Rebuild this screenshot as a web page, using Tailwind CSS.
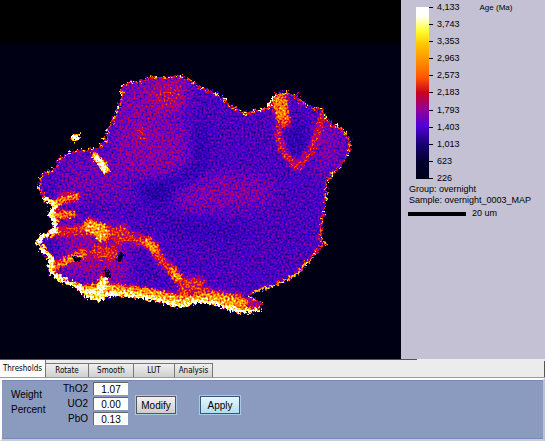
<!DOCTYPE html>
<html lang="en">
<head>
    <meta charset="utf-8">
    <meta name="viewport" content="width=device-width, initial-scale=1">
    <title>Age map</title>
    <script src="https://cdn.jsdelivr.net/npm/@tailwindcss/browser@4"></script>
</head>
<body class="flex min-h-screen flex-col bg-[#ececec] font-['Liberation_Sans',Arial,sans-serif] text-black">

<main class="flex bg-[#c5c1d5]">
    <!-- Age map: grey levels are drawn first, the filter adds grain and maps them to the colour scale -->
    <div class="min-w-0 flex-1 bg-[#000014]">
        <svg xmlns="http://www.w3.org/2000/svg" viewBox="0 0 401 359" class="block h-auto w-full" role="img" aria-label="Age map of the sample">
            <defs>
                <path id="grain" d="M121 92L122 86L130 82L142 80L150 77L165 77L180 76L190 79L200 87L215 93L224 98L228 104L240 110L247 113L258 110L268 107L272 101L277 93L288 92L295 95L304 103L314 107L323 109L326 118L332 124L342 129L349 138L351 147L348 156L341 166L333 174L327 183L326 200L323 220L321 239L327 244L320 247L312 258L300 270L295 276L280 283L268 289L255 292L250 297L262 303L259 310L240 312L226 306L210 302L195 301L180 305L165 301L150 297L130 294L108 293L100 300L88 297L78 287L62 281L51 272L50 264L52 260L42 250L38 243L42 236L55 231L54 220L50 215L55 205L45 200L39 190L40 178L44 172L53 170L60 158L72 151L85 150L98 147L105 140L108 128L115 115L121 100Z"/>
                <clipPath id="inside"><use href="#grain"/></clipPath>
                <filter id="soft" x="-20%" y="-20%" width="140%" height="140%" color-interpolation-filters="sRGB">
                    <feGaussianBlur stdDeviation="7"/>
                </filter>
                <filter id="vein" x="-20%" y="-20%" width="140%" height="140%" color-interpolation-filters="sRGB">
                    <feGaussianBlur stdDeviation="1.8"/>
                </filter>
                <filter id="heat" filterUnits="userSpaceOnUse" x="0" y="44" width="401" height="315" color-interpolation-filters="sRGB">
                    <feTurbulence type="fractalNoise" baseFrequency="0.35" numOctaves="2" seed="4" result="wave"/>
                    <feDisplacementMap in="SourceGraphic" in2="wave" scale="8" xChannelSelector="R" yChannelSelector="G" result="rough"/>
                    <feTurbulence type="fractalNoise" baseFrequency="0.5" numOctaves="2" seed="11"/>
                    <feColorMatrix values="0 0 0 1 0  0 0 0 1 0  0 0 0 1 0  0 0 0 0 1" result="noise"/>
                    <feComposite in="rough" in2="noise" operator="arithmetic" k1="1.3" k2="0.38" k3="0" k4="0"/>
                    <feColorMatrix values="1 0 0 0 0  0 1 0 0 0  0 0 1 0 0  0 0 0 0 1"/>
                    <feComponentTransfer>
                        <feFuncR type="table" tableValues="0 0 .09 .27 .58 .84 1 1 1 1 1"/>
                        <feFuncG type="table" tableValues="0 0 0 0 0 0 .33 .55 .78 1 1"/>
                        <feFuncB type="table" tableValues=".08 .2 .54 .82 .66 .14 0 0 0 .2 1"/>
                    </feComponentTransfer>
                </filter>
            </defs>
            <rect width="401" height="44" fill="#000"/>
            <g filter="url(#heat)" stroke-linejoin="round" stroke-linecap="round" fill="none">
                <rect y="44" width="401" height="315" fill="#000"/>
                <use href="#grain" fill="#4a4a4a"/>
                <g clip-path="url(#inside)">
                    <g filter="url(#soft)">
                        <path d="M122 85L180 78L186 110L150 118L188 124L190 165L160 180L118 172L112 145Z" fill="#5d5d5d"/>
                        <path d="M150 83L186 78L184 108L158 112Z" fill="#727272"/>
                        <path d="M60 160L110 155L140 200L60 200Z" fill="#565656"/>
                        <path d="M175 192L215 173L275 180L268 204L200 214L176 206Z" fill="#5b5b5b"/>
                        <path d="M315 115L345 135L340 160L315 180Z" fill="#5a5a5a"/>
                        <path d="M140 184L165 180L195 165L194 120L204 130L202 172L172 188L160 206L142 196Z" fill="#373737"/>
                        <path d="M150 222L200 215L250 228L240 240L190 238Z" fill="#424242"/>
                        <path d="M290 125L306 125L300 158L288 148Z" fill="#3a3a3a"/>
                        <path d="M48 242L75 238L92 246L62 255Z" fill="#424242"/>
                        <path d="M60 225L125 222L130 285L65 275Z" fill="#606060"/>
                        <path d="M128 255L150 255L172 285L132 284Z" fill="#474747"/>
                    </g>
                    <g filter="url(#vein)">
                        <path d="M141 130L144 138M138 138L141 134" stroke="#737373" stroke-width="6"/>
                        <path d="M279 97L283 120" stroke="#a8a8a8" stroke-width="14"/>
                        <path d="M281 122L278 135L283 152L297 168" stroke="#858585" stroke-width="6"/>
                        <path d="M322 116L319 130L312 150L299 166" stroke="#7d7d7d" stroke-width="7"/>
                        <path d="M55 205L62 199L76 197M54 216L72 214" stroke="#a6a6a6" stroke-width="8"/>
                        <path d="M56 232L78 230L96 229L122 234L143 242" stroke="#828282" stroke-width="10"/>
                        <path d="M90 226L100 230L102 235" stroke="#bcbcbc" stroke-width="14"/>
                        <path d="M122 232L119 238M98 252L112 254" stroke="#858585" stroke-width="14"/>
                        <path d="M52 268L68 260L84 254" stroke="#a6a6a6" stroke-width="8"/>
                        <path d="M144 241L153 245L160 259L172 271L182 283L184 298" stroke="#888" stroke-width="9"/>
                        <path d="M148 241L154 250M174 272L180 281" stroke="#b4b4b4" stroke-width="8"/>
                        <path d="M182 283L200 282M190 287L212 294L240 298" stroke="#868686" stroke-width="9"/>
                        <path d="M84 290L108 288L150 293L182 300L215 298L250 305" stroke="#b8b8b8" stroke-width="9"/>
                        <path d="M104 280L98 292L85 294M94 295L180 306" stroke="#fff" stroke-width="8"/>
                    </g>
                    <use href="#grain" stroke="#808080" stroke-width="4"/>
                    <!-- hot lower left rim -->
                    <path d="M45 200L55 205L50 215L54 220L55 231L42 236L38 243L42 250L52 260L50 264L51 272L62 281L78 287L88 297L100 300L108 293L130 294L150 297L165 301L180 305L195 301L210 302L226 306L240 312L259 310" stroke="#c4c4c4" stroke-width="7"/>
                </g>
                <!-- bright specks round the rim -->
                <use href="#grain" stroke="#fff" stroke-width="2" stroke-dasharray="1 4 2 5 1 3 2 7" stroke-linecap="butt"/>
                <path d="M45 200L55 205L50 215L54 220L55 231L42 236L38 243L42 250L52 260L50 264L51 272L62 281L78 287L88 297L100 300L108 294L130 295L150 298L165 302L180 306L195 302L210 302L226 307L240 312L259 310" stroke="#fff" stroke-width="4"/>
                <path d="M322 240L326 244M312 258L296 275L280 283L255 291" stroke="#b5b5b5" stroke-width="2"/>
                <path d="M250 304L259 305" stroke="#6a6a6a" stroke-width="7"/>
                <path d="M95 156L99 160L106 170" stroke="#b4b4b4" stroke-width="8"/>
                <path d="M96 157L99 160L105 169" stroke="#fff" stroke-width="5"/>
                <path d="M74 138L76 138" stroke="#fff" stroke-width="6"/>
                <path d="M79 135h1M268 106L275 96" stroke="#fff" stroke-width="2"/>
                <path d="M75 258L79 260M106 271L108 276M118 259L122 255" stroke="#000" stroke-width="4"/>
            </g>
        </svg>
    </div>

    <!-- Legend -->
    <aside class="w-36 shrink-0 pl-2 text-[9px] leading-[11px]">
        <div class="flex">
            <div class="mt-[7px] ml-[7px] h-[172px] w-[13px] bg-[linear-gradient(#fff_0%,#fff_5%,#ffff30_14%,#ffc400_22%,#ff8c00_32%,#ff5500_41%,#c80020_50%,#90009a_60%,#5000d8_69%,#180070_80%,#00002e_90%,#000018_100%)]"></div>
            <ol class="mt-[2px] flex h-[182px] flex-col justify-between">
                <li class="flex items-center gap-1"><span class="h-px w-1 bg-black"></span>4,133</li>
                <li class="flex items-center gap-1"><span class="h-px w-1 bg-black"></span>3,743</li>
                <li class="flex items-center gap-1"><span class="h-px w-1 bg-black"></span>3,353</li>
                <li class="flex items-center gap-1"><span class="h-px w-1 bg-black"></span>2,963</li>
                <li class="flex items-center gap-1"><span class="h-px w-1 bg-black"></span>2,573</li>
                <li class="flex items-center gap-1"><span class="h-px w-1 bg-black"></span>2,183</li>
                <li class="flex items-center gap-1"><span class="h-px w-1 bg-black"></span>1,793</li>
                <li class="flex items-center gap-1"><span class="h-px w-1 bg-black"></span>1,403</li>
                <li class="flex items-center gap-1"><span class="h-px w-1 bg-black"></span>1,013</li>
                <li class="flex items-center gap-1"><span class="h-px w-1 bg-black"></span>623</li>
                <li class="flex items-center gap-1"><span class="h-px w-1 bg-black"></span>226</li>
            </ol>
            <h2 class="mt-[2px] ml-5 text-[8px]">Age (Ma)</h2>
        </div>
        <p>Group: overnight</p>
        <p class="whitespace-nowrap">Sample: overnight_0003_MAP</p>
        <div class="-ml-px flex items-center gap-[6px] pt-[2px]">
            <span class="h-1 w-[58px] bg-black"></span>20 um
        </div>
    </aside>
</main>

<!-- Controls -->
<section class="flex flex-1 flex-col">
    <div class="h-px w-[417px] bg-[#555]"></div>
    <div role="tablist" class="flex h-[18px] items-end border-b border-[#8f9cab] font-['DejaVu_Sans_Condensed','DejaVu_Sans',sans-serif] text-[8px] leading-3">
        <button role="tab" aria-selected="true" class="h-[17px] w-[46px] border-r border-[#777] bg-white text-center">Thresholds</button>
        <button role="tab" aria-selected="false" class="h-[14px] w-[43px] border-t border-r border-[#777] bg-linear-to-b from-[#f0f0f0] to-[#cfcfcf]">Rotate</button>
        <button role="tab" aria-selected="false" class="h-[14px] w-[45px] border-t border-r border-[#777] bg-linear-to-b from-[#f0f0f0] to-[#cfcfcf]">Smooth</button>
        <button role="tab" aria-selected="false" class="h-[14px] w-[41px] border-t border-r border-[#777] bg-linear-to-b from-[#f0f0f0] to-[#cfcfcf]">LUT</button>
        <button role="tab" aria-selected="false" class="h-[14px] w-[38px] border-t border-r border-[#777] bg-linear-to-b from-[#f0f0f0] to-[#cfcfcf]">Analysis</button>
        <span class="ml-auto h-4 w-px bg-[#555]"></span>
    </div>
    <div class="flex flex-1 border-x-2 border-y-2 border-t-white border-r-[#b9c3d6] border-b-[#c9cdd8] border-l-white bg-[#8a9bbf]">
        <form class="flex w-full border-y border-[#6f8db8] text-[10px]">
            <p class="w-[52px] pt-[6px] pl-[9px] leading-[15px]">Weight Percent</p>
            <div class="grid grid-cols-[34px_35px] content-start gap-x-[5px] gap-y-[2px] pt-px">
                <label for="tho2" class="text-right leading-[13px]">ThO2</label>
                <input id="tho2" value="1.07" class="h-[13px] border-t border-l border-[#666] bg-white text-center">
                <label for="uo2" class="text-right leading-[13px]">UO2</label>
                <input id="uo2" value="0.00" class="h-[13px] border-t border-l border-[#666] bg-white text-center">
                <label for="pbo" class="text-right leading-[13px]">PbO</label>
                <input id="pbo" value="0.13" class="h-[13px] border-t border-l border-[#666] bg-white text-center">
            </div>
            <button type="button" class="mt-[15px] ml-2 h-[18px] w-10 border border-[#555] bg-linear-to-b from-[#f2f2f2] to-[#cdcdcd] outline outline-[#a9cbe0]">Modify</button>
            <button type="button" class="mt-[15px] ml-6 h-[18px] w-10 border border-[#2c5a78] bg-linear-to-b from-[#eaf6fd] to-[#b5dcf0] outline outline-[#a9cbe0]">Apply</button>
        </form>
    </div>
</section>

</body>
</html>
